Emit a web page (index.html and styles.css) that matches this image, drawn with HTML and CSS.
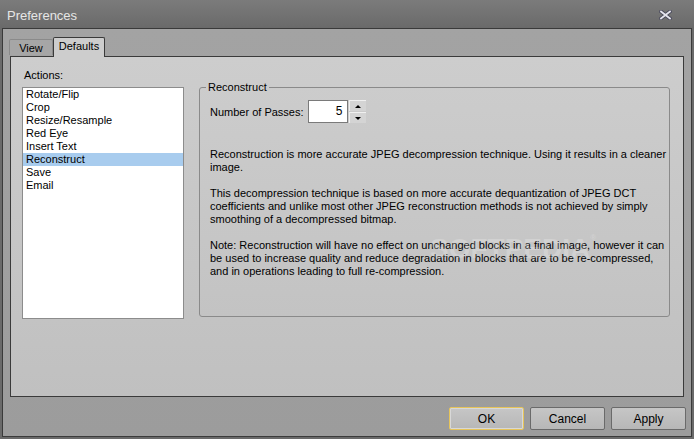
FILE: index.html
```html
<!DOCTYPE html>
<html>
<head>
	<title>Preferences</title>
	<meta charset="UTF-8">
	<link rel="stylesheet" href="styles.css">
</head>
<body>
	<div class="window">
		<div class="titlebar">
			<div class="title">Preferences</div>
			<button class="close-btn" title="Close">
				<svg viewBox="0 0 13 10" width="13" height="10">
					<path d="M2 1.5L11 8.5M11 1.5L2 8.5" stroke="#4a4a5c" stroke-width="3.6" stroke-linecap="square"/>
					<path d="M2 1.5L11 8.5M11 1.5L2 8.5" stroke="#e4e4ee" stroke-width="1.8" stroke-linecap="square"/>
				</svg>
			</button>
		</div>

		<div class="client">
			<div class="tabs">
				<div class="tab">View</div>
				<div class="tab active">Defaults</div>
			</div>

			<div class="tab-panel">
				<div class="actions">
					<div class="label">Actions:</div>
					<ul class="list">
						<li>Rotate/Flip</li>
						<li>Crop</li>
						<li>Resize/Resample</li>
						<li>Red Eye</li>
						<li>Insert Text</li>
						<li class="selected">Reconstruct</li>
						<li>Save</li>
						<li>Email</li>
					</ul>
				</div>

				<fieldset class="group">
					<legend>Reconstruct</legend>
					<div class="group-body">
						<div class="passes">
							<label>Number of Passes:</label>
							<div class="num-input">5</div>
							<div class="spinner">
								<div class="spin-btn"><span class="arrow-up"></span></div>
								<div class="spin-btn"><span class="arrow-down"></span></div>
							</div>
						</div>

						<p>Reconstruction is more accurate JPEG decompression technique. Using it results in a cleaner<br>image.</p>
						<p>This decompression technique is based on more accurate dequantization of JPEG DCT<br>coefficients and unlike most other JPEG reconstruction methods is not achieved by simply<br>smoothing of a decompressed bitmap.</p>
						<p>Note: Reconstruction will have no effect on unchanged blocks in a final image, however it can<br>be used to increase quality and reduce degradation in blocks that are to be re-compressed,<br>and in operations leading to full re-compression.</p>
					</div>
					<div class="watermark">SOFTPEDIA<sup>®</sup></div>
				</fieldset>
			</div>

			<div class="buttons">
				<button class="btn default">OK</button>
				<button class="btn">Cancel</button>
				<button class="btn">Apply</button>
			</div>
		</div>
	</div>
</body>
</html>
```

FILE: styles.css
```css
body {
	margin: 0;
	font-family: 'Liberation Sans', Arial, sans-serif;
	font-size: 11px;
	color: #000;
	background: #6c6c6c;
}

.window {
	width: 694px;
	height: 439px;
	box-sizing: border-box;
	padding: 0 2px 2px 2px;
	background: linear-gradient(#7b7b7b, #6a6a6a 28px, #6a6a6a);
	display: flex;
	flex-direction: column;
}

.titlebar {
	flex-shrink: 0;
	height: 28px;
	display: flex;
	align-items: center;
	justify-content: space-between;
	padding: 0 20px 0 5px;
}

.title {
	font-size: 13px;
	color: #e6e6e6;
	padding-top: 2px;
}

.close-btn {
	background: none;
	border: none;
	padding: 0;
	margin-top: 1px;
	cursor: pointer;
}

svg {
	display: block;
}

.client {
	flex: 1;
	min-height: 0;
	border: 1px solid #3a3a3a;
	background: linear-gradient(#a3a3a3, #9c9c9c);
	display: flex;
	flex-direction: column;
}

.tabs {
	flex-shrink: 0;
	display: flex;
	align-items: flex-end;
	padding: 7px 0 0 6px;
	height: 20px;
}

.tab {
	height: 15px;
	width: 42px;
	line-height: 16px;
	text-align: center;
	border: 1px solid #8a8a8a;
	border-bottom: none;
	border-radius: 2px 2px 0 0;
	background: #a6a6a6;
	margin-bottom: 1px;
}

.tab.active {
	height: 19px;
	width: 50px;
	line-height: 17px;
	border-color: #3a3a3a;
	background: #cdcdcd;
	margin-bottom: -1px;
	position: relative;
	z-index: 1;
}

.tab-panel {
	flex-shrink: 0;
	margin: 0 7px;
	height: 327px;
	border: 1px solid #3a3a3a;
	background: linear-gradient(#cdcdcd, #c0c0c0);
	display: flex;
	gap: 15px;
	padding: 12px 0 0 11px;
}

.label {
	line-height: 13px;
	padding-left: 2px;
	margin-bottom: 5px;
}

.list {
	list-style: none;
	margin: 0;
	padding: 0;
	width: 160px;
	height: 230px;
	background: #fff;
	border: 1px solid #8c8c8c;
}

.list li {
	line-height: 13px;
	padding-left: 3px;
}

.list li.selected {
	background: #a8ccee;
}

.group {
	position: relative;
	margin: 12px 0 0 0;
	width: 463px;
	height: 234px;
	box-sizing: content-box;
	padding: 0 0 0 6px;
	border: 1px solid #8a8a8a;
	border-radius: 3px;
	min-width: 0;
}

.group legend {
	padding: 0 2px;
	line-height: 13px;
}

.group-body {
	padding: 6px 0 0 4px;
}

.passes {
	display: flex;
	align-items: center;
	height: 23px;
}

.passes label {
	flex-shrink: 0;
	white-space: nowrap;
	margin-right: 4px;
}

.num-input {
	width: 34px;
	height: 21px;
	line-height: 21px;
	text-align: right;
	padding-right: 4px;
	background: #fff;
	border: 1px solid #7a7a7a;
	font-size: 12px;
}

.spinner {
	margin-left: 1px;
	width: 17px;
	height: 23px;
	display: flex;
	flex-direction: column;
	gap: 1px;
}

.spin-btn {
	flex: 1;
	background: #d4d4d4;
	border-top: 1px solid #f0f0f0;
	border-left: 1px solid #f0f0f0;
	display: flex;
	align-items: center;
	justify-content: center;
}

.arrow-up {
	border: 3px solid transparent;
	border-bottom: 3px solid #000;
	border-top: none;
}

.arrow-down {
	border: 3px solid transparent;
	border-top: 3px solid #000;
	border-bottom: none;
}

.group p {
	margin: 0;
	line-height: 13px;
}

.passes + p {
	margin-top: 25px;
}

.group p + p {
	margin-top: 13px;
}

.watermark {
	position: absolute;
	left: 230px;
	top: 139px;
	font-size: 28px;
	font-weight: bold;
	color: rgba(255, 255, 255, 0.22);
	pointer-events: none;
}

.watermark sup {
	font-size: 8px;
	vertical-align: top;
}

.buttons {
	flex-shrink: 0;
	display: flex;
	justify-content: flex-end;
	gap: 6px;
	padding: 10px 5px 0 0;
}

.btn {
	width: 75px;
	height: 23px;
	font-family: inherit;
	font-size: 12px;
	color: #000;
	border: 1px solid #6a6a6a;
	border-radius: 2px;
	background: linear-gradient(#c6c6c6, #b7b7b7);
	cursor: pointer;
	padding: 0;
}

.btn.default {
	border-color: #e6c45a;
	box-shadow: inset 0 0 0 1px #d8d8d8;
}
```
